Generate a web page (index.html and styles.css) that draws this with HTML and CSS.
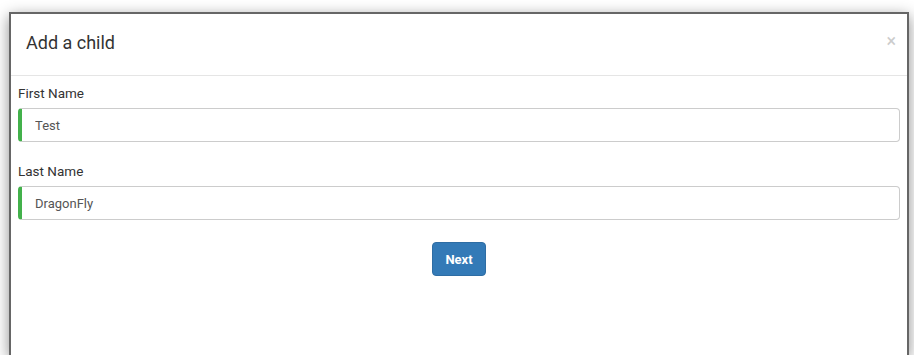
FILE: index.html
```html
<html>
<head>
  <meta charset="utf-8">
  <link rel="stylesheet" href="styles.css">
</head>
<body>
<div class="modal">
  <div class="modal-header">
    <span class="close">&times;</span>
    <h4 class="modal-title">Add a child</h4>
  </div>
  <div class="modal-body">
    <div class="form-group">
      <label>First Name</label>
      <input class="form-control valid" type="text" value="Test">
    </div>
    <div class="form-group">
      <label>Last Name</label>
      <input class="form-control valid" type="text" value="DragonFly">
    </div>
    <div class="actions">
      <button class="btn btn-primary">Next</button>
    </div>
  </div>
</div>
</body>
</html>
```

FILE: styles.css
```css
html, body {
  margin: 0;
  background: #fff;
  font: normal 13px Roboto, "Liberation Sans", sans-serif;
  color: #333;
}
.modal {
  margin: 12px 0 0 9px;
  width: 896px;
  height: 341px;
  border: 2px solid #666;
  border-bottom: 0;
  background: #fff;
  box-shadow: 0 4px 14px rgba(0, 0, 0, .45);
}
.modal-header {
  padding: 15px 15px 19px;
  border-bottom: 1px solid #e5e5e5;
}
.modal-title {
  margin: 0;
  font-size: 18px;
  font-weight: normal;
  line-height: 27px;
  color: #333;
}
.close {
  float: right;
  margin-right: -4px;
  font-size: 18px;
  line-height: 24px;
  color: #ccc;
}
.modal-body {
  padding: 8px 7px;
}
.form-group {
  margin-bottom: 20px;
}
.form-group label {
  display: block;
  font-size: 13.5px;
  line-height: 18px;
  margin-bottom: 6px;
}
.form-control {
  display: block;
  box-sizing: border-box;
  width: 100%;
  height: 34px;
  padding: 0 13px;
  border: 1px solid #ccc;
  border-radius: 4px;
  font: inherit;
  color: #555;
  outline: none;
}
.form-control.valid {
  border-left: 4px solid #43b14b;
}
.actions {
  text-align: center;
  padding-top: 2px;
}
.btn {
  height: 34px;
  padding: 0 12px;
  border: 1px solid #2e6da4;
  border-radius: 4px;
  background: #337ab7;
  color: #fff;
  font: bold 13px Roboto, "Liberation Sans", sans-serif;
}
```
